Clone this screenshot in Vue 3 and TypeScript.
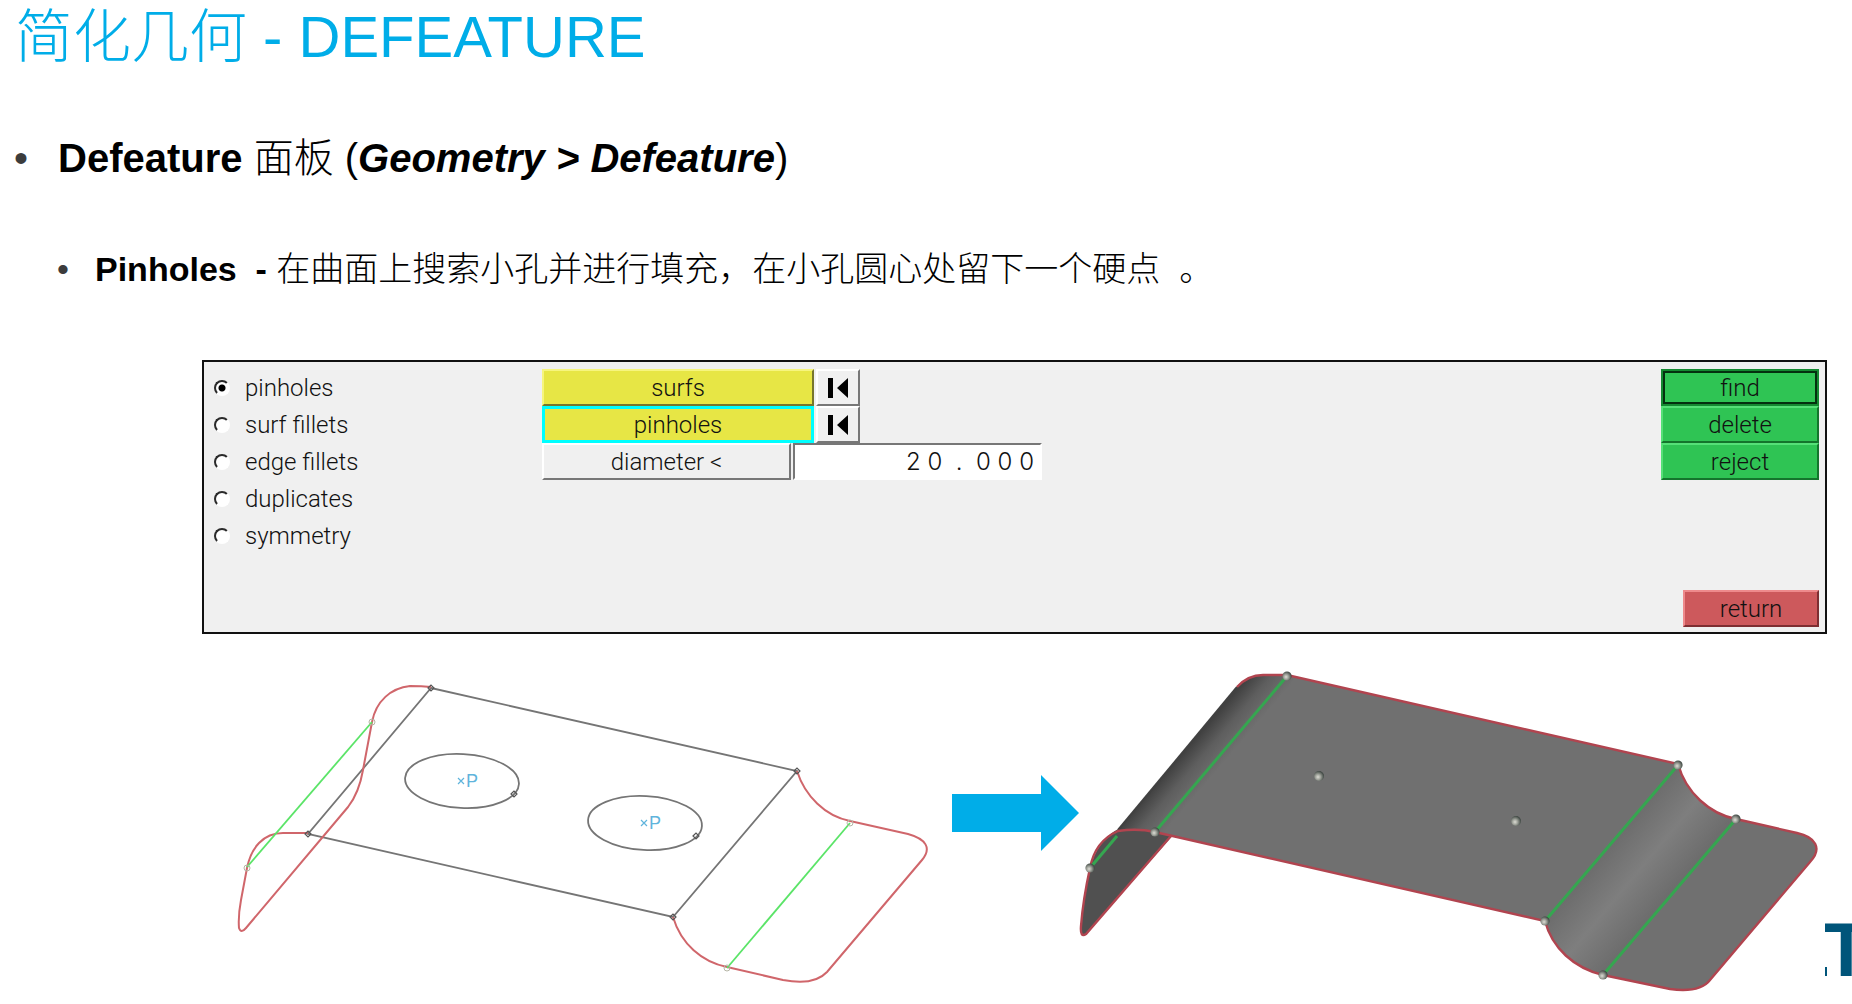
<script setup lang="ts">
import { ref } from 'vue'

interface Point {
  x: number
  y: number
}

const modes: string[] = ['pinholes', 'surf fillets', 'edge fillets', 'duplicates', 'symmetry']
const mode = ref<string>('pinholes')
const diameter = ref<string>('2 0  .  0 0 0')

const wireNodes: Point[] = [
  { x: 431, y: 688 },
  { x: 308, y: 834 },
  { x: 797, y: 771 },
  { x: 673, y: 917 },
  { x: 514, y: 794 },
  { x: 696, y: 836 },
]
const paleNodes: Point[] = [
  { x: 372, y: 722 },
  { x: 247, y: 868 },
  { x: 850, y: 823 },
  { x: 727, y: 968 },
]
const holes: Point[] = [
  { x: 462, y: 781 },
  { x: 645, y: 823 },
]
const solidNodes: Point[] = [
  { x: 1287, y: 676 },
  { x: 1155, y: 832 },
  { x: 1090, y: 868 },
  { x: 1678, y: 765 },
  { x: 1736, y: 819 },
  { x: 1545, y: 921 },
  { x: 1603, y: 975 },
]
const hardPoints: Point[] = [
  { x: 1319, y: 776 },
  { x: 1516, y: 821 },
]
</script>

<template>
  <main class="slide">
    <h1>简化几何 - DEFEATURE</h1>
    <ul class="outer">
      <li>
        <p class="lead"><b>Defeature</b> 面板 (<b><i>Geometry &gt; Defeature</i></b>)</p>
        <ul class="inner">
          <li><p class="detail"><b>Pinholes&nbsp; -</b> 在曲面上搜索小孔并进行填充，在小孔圆心处留下一个硬点&nbsp; 。</p></li>
        </ul>
      </li>
    </ul>

    <form class="panel" @submit.prevent>
      <div class="modes">
        <label v-for="m in modes" :key="m">
          <input v-model="mode" type="radio" name="mode" :value="m" />
          <span>{{ m }}</span>
        </label>
      </div>
      <div class="fields">
        <div class="row">
          <button type="button" class="pick">surfs</button>
          <button type="button" class="reset" aria-label="reset surfs">
            <svg viewBox="0 0 20 20" aria-hidden="true"><path d="M0 0H5V20H0zM20 0V20L9 10z" /></svg>
          </button>
        </div>
        <div class="row">
          <button type="button" class="pick active">pinholes</button>
          <button type="button" class="reset" aria-label="reset pinholes">
            <svg viewBox="0 0 20 20" aria-hidden="true"><path d="M0 0H5V20H0zM20 0V20L9 10z" /></svg>
          </button>
        </div>
        <div class="row">
          <button type="button" class="size">diameter &lt;</button>
          <input v-model="diameter" class="value" type="text" aria-label="diameter" />
        </div>
      </div>
      <div class="actions">
        <button type="button" class="go focused">find</button>
        <button type="button" class="go">delete</button>
        <button type="button" class="go">reject</button>
        <button type="button" class="back">return</button>
      </div>
    </form>

    <section class="figures">
      <svg viewBox="220 660 722 336" role="img" aria-label="Wireframe with two pinholes">
        <g fill="none" stroke="#757575" stroke-width="1.8">
          <path d="M431 688L797 771L673 917L308 834Z" />
          <ellipse v-for="h in holes" :key="h.x" :cx="h.x" :cy="h.y" rx="57" ry="27" :transform="`rotate(3 ${h.x} ${h.y})`" />
        </g>
        <g fill="none" stroke="#d0666b" stroke-width="2">
          <path d="M431 687Q422 686 410 686C391 688 376 701 372 722L363 770Q359 793 348 807L246 928Q241 934 239 928Q238 916 241 900L247 868C251 848 263 833 283 833H308" />
          <path d="M797 771C805 796 825 816 850 821L908 834C926 839 932 848 922 860L827 972Q814 986 783 980L727 967C702 962 681 944 673 917" />
        </g>
        <g stroke="#5be468" stroke-width="1.8">
          <path d="M372 722L247 867" />
          <path d="M850 823L727 968" />
        </g>
        <g fill="none" stroke="#555" stroke-width="1.2">
          <path v-for="n in wireNodes" :key="n.x" :d="`M${n.x - 3} ${n.y}l3 -3l3 3l-3 3z`" />
        </g>
        <g fill="none" stroke="#b5b5a5" stroke-width="1">
          <circle v-for="n in paleNodes" :key="n.x" :cx="n.x" :cy="n.y" r="3" />
        </g>
        <g v-for="h in holes" :key="h.x">
          <path :d="`M${h.x - 4} ${h.y - 3}l6 6m0 -6l-6 6`" stroke="#5fb4dc" stroke-width="1.2" />
          <text :x="h.x + 4" :y="h.y + 6" class="mark">P</text>
        </g>
      </svg>

      <svg viewBox="942 660 137 336" role="img" aria-label="becomes">
        <path d="M952 794H1041V775L1079 813L1041 851V832H952Z" fill="#00ade8" />
      </svg>

      <svg viewBox="1079 660 741 336" role="img" aria-label="Solid surface with pinholes filled">
        <defs>
          <linearGradient id="bend" gradientUnits="userSpaceOnUse" x1="1120" y1="827" x2="1148" y2="851">
            <stop offset="0" stop-color="#414141" />
            <stop offset=".45" stop-color="#5e5e5e" />
            <stop offset="1" stop-color="#707070" />
          </linearGradient>
          <linearGradient id="fillet" gradientUnits="userSpaceOnUse" x1="1545" y1="921" x2="1606" y2="972">
            <stop offset="0" stop-color="#6c6c6c" />
            <stop offset=".5" stop-color="#7e7e7e" />
            <stop offset="1" stop-color="#6c6c6c" />
          </linearGradient>
          <radialGradient id="ball" cx=".4" cy=".6" r=".6">
            <stop offset="0" stop-color="#dcdcd4" />
            <stop offset=".4" stop-color="#a5a8a0" />
            <stop offset="1" stop-color="#3f4843" />
          </radialGradient>
        </defs>
        <path d="M1155 831L1173 835L1086 934Q1080 938 1081 926Q1083 900 1090 868C1095 850 1104 836 1120 828Z" fill="#505050" />
        <path d="M1287 675L1678 764L1545 921L1155 832Q1138 828 1118 830L1237 687Q1248 675 1263 675Z" fill="url(#bend)" />
        <path d="M1678 764C1686 793 1710 814 1736 819L1603 975C1574 968 1552 948 1545 921Z" fill="url(#fillet)" />
        <path d="M1736 819L1797 833C1815 837 1823 848 1810 862L1710 980Q1700 993 1670 989L1603 975Z" fill="#707070" />
        <path d="M1237 687L1118 830" stroke="#414141" stroke-width="2" />
        <g fill="none" stroke="#b1444f" stroke-width="2.4">
          <path d="M1237 687Q1248 675 1263 675H1287L1678 764C1686 793 1710 814 1736 819L1797 833C1815 837 1823 848 1810 862L1710 980Q1700 993 1670 989L1603 975C1574 968 1552 948 1545 921L1155 832Q1138 828 1118 831C1102 838 1093 852 1090 868Q1083 900 1081 926Q1080 938 1086 934L1171 836" />
        </g>
        <g stroke="#35a650" stroke-width="3">
          <path d="M1287 676L1155 832" />
          <path d="M1117 836L1090 868" />
          <path d="M1678 765L1545 921" />
          <path d="M1736 819L1603 975" />
        </g>
        <circle v-for="n in solidNodes" :key="n.x" :cx="n.x" :cy="n.y" r="4.6" fill="url(#ball)" />
        <circle v-for="n in hardPoints" :key="n.x" :cx="n.x" :cy="n.y" r="5" fill="url(#ball)" />
      </svg>

      <svg class="logo" viewBox="1825 660 27 336" role="img" aria-label="Logo">
        <rect x="1825" y="967" width="2" height="9" />
        <text x="1823" y="976">T</text>
      </svg>
    </section>
  </main>
</template>

<style>
body {
  margin: 0;
  background: #fff;
}
</style>

<style scoped>
.slide {
  box-sizing: border-box;
  padding-top: 3px;
  overflow: hidden;
  color: #000;
  font-family: "Liberation Sans", "Noto Sans CJK SC", sans-serif;
}

h1 {
  margin: 0 0 63px 15px;
  color: #00ade8;
  font-size: 58px;
  font-weight: 300;
  line-height: 68px;
}

ul {
  margin: 0;
  padding: 0;
  list-style: none;
}

li {
  position: relative;
}

li::before {
  content: "•";
  position: absolute;
  top: 0;
  left: -44px;
  color: #3c3c3c;
}

p {
  margin: 0;
  font-weight: 300;
}

b {
  font-weight: 700;
}

.outer {
  margin-left: 58px;
  font-size: 40px;
  line-height: 48px;
}

.inner {
  margin: 67px 0 71px 37px;
  font-size: 34px;
  line-height: 40px;
}

.inner li::before {
  left: -38px;
}

.panel {
  display: flex;
  box-sizing: border-box;
  min-height: 274px;
  margin: 0 25px 26px 202px;
  padding: 7px 6px 5px 10px;
  border: 2px solid #111;
  background: #f0f0f0;
}

.panel,
.panel button,
.panel input {
  color: #111;
  font-family: Roboto, "Liberation Sans", sans-serif;
  font-size: 24px;
  font-weight: 300;
}

.modes {
  display: flex;
  flex-direction: column;
  width: 328px;
}

.modes label {
  display: flex;
  align-items: center;
  gap: 15px;
  height: 37px;
}

.modes input {
  appearance: none;
  width: 16px;
  height: 16px;
  margin: 0;
  border: 2px solid;
  border-color: #2a2a2a #fff #fff #2a2a2a;
  border-radius: 50%;
  background: #fff;
}

.modes input:checked {
  background: radial-gradient(circle, #000 3px, #fff 4px);
}

.fields {
  display: flex;
  flex: 1;
  flex-direction: column;
}

.row {
  display: flex;
  gap: 2px;
  height: 37px;
}

button {
  box-sizing: border-box;
  height: 37px;
  padding: 0;
  border: 2px solid;
  border-radius: 0;
  line-height: 32px;
}

.pick {
  width: 272px;
  border-color: #f6f57e #77762d #77762d #f6f57e;
  background: #e7e645;
}

.pick.active {
  border: 3px solid #00ffff;
  line-height: 30px;
}

.reset,
.size {
  border-color: #fff #777 #777 #fff;
  background: #f0f0f0;
}

.reset {
  display: flex;
  align-items: center;
  justify-content: center;
  width: 44px;
}

.reset svg {
  width: 20px;
  height: 20px;
}

.size {
  width: 249px;
}

.panel .value {
  box-sizing: border-box;
  width: 249px;
  height: 37px;
  padding: 0 6px;
  border: 2px solid;
  border-color: #777 #fff #fff #777;
  background: #fff;
  font-family: Inter, sans-serif;
  text-align: right;
}

.actions {
  display: flex;
  flex-direction: column;
  align-items: flex-end;
}

.go {
  width: 158px;
  border-color: #55e077 #14752c #14752c #55e077;
  background: #2fc454;
}

.focused {
  border-color: #148a31;
  outline: 2px solid #04300f;
  outline-offset: -4px;
}

.back {
  width: 136px;
  margin-top: auto;
  border-color: #ee8a8c #7d2e32 #7d2e32 #ee8a8c;
  background: #cd595c;
}

.figures {
  display: grid;
  grid-template-columns: 722fr 137fr 741fr 32px;
  padding-left: 220px;
}

.figures svg {
  display: block;
  width: 100%;
}

.figures .logo {
  justify-self: end;
  width: 27px;
}

.mark {
  fill: #5fb4dc;
  font-size: 18px;
}

.logo {
  fill: #00557a;
  font-size: 76px;
  font-weight: 700;
}
</style>
